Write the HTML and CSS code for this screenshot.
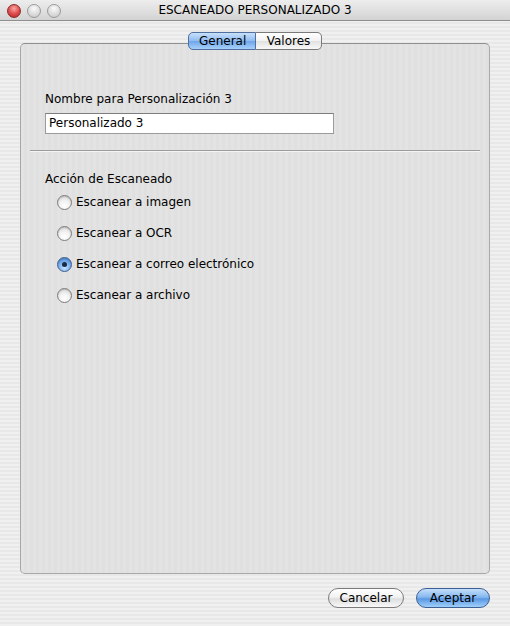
FILE: index.html
```html
<!DOCTYPE html>
<html lang="es">
<head>
<meta charset="utf-8">
<title>ESCANEADO PERSONALIZADO 3</title>
<link rel="stylesheet" href="styles.css">
</head>
<body>
<div class="window">
  <div class="titlebar">
    <div class="lights">
      <span class="light close"></span>
      <span class="light"></span>
      <span class="light"></span>
    </div>
    <div class="title">ESCANEADO PERSONALIZADO 3</div>
  </div>
  <div class="content">
    <div class="tabs">
      <span class="tab selected">General</span>
      <span class="tab">Valores</span>
    </div>
    <div class="panel">
      <div class="label">Nombre para Personalización 3</div>
      <div class="field">Personalizado 3</div>
      <div class="separator"></div>
      <div class="label">Acción de Escaneado</div>
      <div class="radios">
        <div class="radio-row"><span class="radio"></span><span>Escanear a imagen</span></div>
        <div class="radio-row"><span class="radio"></span><span>Escanear a OCR</span></div>
        <div class="radio-row"><span class="radio checked"></span><span>Escanear a correo electrónico</span></div>
        <div class="radio-row"><span class="radio"></span><span>Escanear a archivo</span></div>
      </div>
    </div>
    <div class="buttons">
      <span class="button">Cancelar</span>
      <span class="button default">Aceptar</span>
    </div>
  </div>
</div>
</body>
</html>
```
FILE: styles.css
```css
html, body {
  margin: 0;
  padding: 0;
}
body {
  width: 510px;
  height: 626px;
  overflow: hidden;
  font-family: "DejaVu Sans", "Liberation Sans", sans-serif;
  font-size: 11px;
  color: #000;
}
.window {
  width: 510px;
  height: 626px;
  display: flex;
  flex-direction: column;
  background: repeating-linear-gradient(180deg, #f0f0f0 0 2px, #e8e8e8 2px 4px);
}
.titlebar {
  height: 20px;
  border-bottom: 1px solid #8e8e8e;
  background: linear-gradient(180deg, #ededed 0%, #dedede 60%, #d2d2d2 100%);
  display: flex;
  align-items: center;
  position: relative;
}
.lights {
  display: flex;
  gap: 6px;
  padding-left: 7px;
  padding-top: 1px;
}
.light {
  width: 12px;
  height: 12px;
  border-radius: 50%;
  border: 1px solid #9a9a9a;
  background: radial-gradient(circle at 50% 30%, #fafafa 0%, #dcdcdc 55%, #c4c4c4 100%);
}
.light.close {
  border-color: #8d2a2a;
  background: radial-gradient(circle at 50% 30%, #f7a7a7 0%, #e0504f 50%, #b22020 100%);
}
.title {
  position: absolute;
  left: 0;
  right: 0;
  top: 0;
  height: 20px;
  line-height: 20px;
  text-align: center;
  font-size: 12px;
  pointer-events: none;
}
.content {
  flex: 1;
  display: flex;
  flex-direction: column;
  padding: 11px 20px 0 20px;
}
.tabs {
  display: flex;
  justify-content: center;
  margin-bottom: -7px;
  position: relative;
  z-index: 1;
}
.tab {
  height: 16px;
  line-height: 16px;
  padding: 0 10px;
  border: 1px solid #7a7a7a;
  background: linear-gradient(180deg, #ffffff 0%, #f2f2f2 50%, #e2e2e2 52%, #f8f8f8 100%);
  font-size: 12px;
}
.tab:first-child {
  border-radius: 5px 0 0 5px;
  width: 46px;
  text-align: center;
}
.tab:last-child {
  border-radius: 0 5px 5px 0;
  border-left: none;
  width: 45px;
  text-align: center;
}
.tab.selected {
  border-color: #4f6f9f;
  background: linear-gradient(180deg, #c8e0fb 0%, #90bdf0 48%, #6ea6ea 52%, #a6d0fa 100%);
}
.panel {
  height: 529px;
  border: 1px solid #a8a8a8;
  border-top-color: #8f8f8f;
  border-radius: 5px;
  background: repeating-linear-gradient(90deg, #e3e3e3 0 3px, #e0e0e0 3px 6px);
  padding: 47px 24px 0 24px;
  display: flex;
  flex-direction: column;
  box-sizing: border-box;
  height: 531px;
}
.label {
  line-height: 16px;
  font-size: 12px;
}
.field {
  margin-top: 6px;
  width: 289px;
  height: 21px;
  box-sizing: border-box;
  border: 1px solid #9b9b9b;
  border-top-color: #7d7d7d;
  background: #fff;
  padding: 0 3px;
  line-height: 19px;
  font-size: 12px;
}
.separator {
  margin: 16px -15px 19px -15px;
  height: 1px;
  background: #9c9c9c;
  border-bottom: 1px solid #f4f4f4;
}
.radios {
  display: flex;
  flex-direction: column;
  gap: 15px;
  margin-top: 7px;
  padding-left: 12px;
}
.radio-row {
  display: flex;
  align-items: center;
  height: 16px;
  font-size: 12px;
  gap: 4px;
}
.radio {
  width: 13px;
  height: 13px;
  border-radius: 50%;
  border: 1px solid #7c7c7c;
  background: radial-gradient(circle at 50% 75%, #ffffff 0%, #f3f3f3 40%, #d0d0d0 100%);
  box-shadow: inset 0 1px 1px rgba(0,0,0,0.15);
  display: flex;
  align-items: center;
  justify-content: center;
}
.radio.checked {
  border-color: #3d5d8d;
  background: radial-gradient(circle at 50% 75%, #c6e4ff 0%, #7fb3ee 45%, #3f7fd3 100%);
}
.radio.checked::after {
  content: "";
  width: 5px;
  height: 5px;
  border-radius: 50%;
  background: #1b2a44;
}
.buttons {
  display: flex;
  justify-content: flex-end;
  gap: 12px;
  margin-top: 14px;
}
.button {
  height: 18px;
  line-height: 18px;
  border-radius: 10px;
  border: 1px solid #7a7a7a;
  background: linear-gradient(180deg, #ffffff 0%, #f2f2f2 45%, #dedede 55%, #f9f9f9 100%);
  text-align: center;
  font-size: 12px;
  width: 74px;
}
.button.default {
  width: 72px;
  border-color: #3d5f93;
  background: linear-gradient(180deg, #c5dffb 0%, #86b8ef 45%, #5b98e3 55%, #9fd0fb 100%);
}
```
